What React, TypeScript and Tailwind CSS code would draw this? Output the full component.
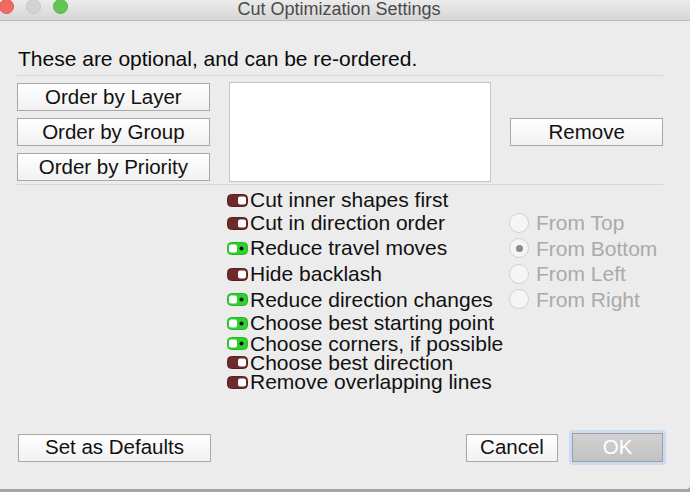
import React from "react";

const font = { fontFamily: '"Liberation Sans", Arial, sans-serif' };

function Toggle({ on }: { on: boolean }) {
  return on ? (
    <svg width="21" height="13" viewBox="0 0 21 13" className="shrink-0">
      <rect x="0.5" y="0.5" width="20" height="12" rx="4" fill="#2fd12f" stroke="#27b327" />
      <rect x="2" y="2.5" width="8" height="8" rx="2" fill="#ffffff" />
      <circle cx="14.5" cy="6.5" r="2" fill="#111" />
    </svg>
  ) : (
    <svg width="21" height="13" viewBox="0 0 21 13" className="shrink-0">
      <rect x="0.5" y="0.5" width="20" height="12" rx="4" fill="#6d2a2b" stroke="#5a2020" />
      <rect x="11" y="2.5" width="8" height="8" rx="2" fill="#ffffff" />
    </svg>
  );
}

function Radio({ checked }: { checked?: boolean }) {
  return (
    <span className="w-[20px] h-[20px] rounded-full border border-[#d2d2d2] bg-[#f5f5f5] flex items-center justify-center shrink-0">
      {checked && <span className="w-[7px] h-[7px] rounded-full bg-[#8c8c8c]" />}
    </span>
  );
}

function Btn({ children, className = "" }: { children: React.ReactNode; className?: string }) {
  return (
    <div
      className={`h-[28px] border border-[#a8a8a8] bg-gradient-to-b from-[#ffffff] to-[#f1f1f1] flex items-center justify-center text-[20.5px] text-[#111] ${className}`}
    >
      {children}
    </div>
  );
}

const checks: { label: string; on: boolean; h: string }[] = [
  { label: "Cut inner shapes first", on: false, h: "h-[22px] leading-[22px]" },
  { label: "Cut in direction order", on: false, h: "h-[24px] leading-[24px]" },
  { label: "Reduce travel moves", on: true, h: "h-[26px] leading-[26px]" },
  { label: "Hide backlash", on: false, h: "h-[26px] leading-[26px]" },
  { label: "Reduce direction changes", on: true, h: "h-[25px] leading-[25px]" },
  { label: "Choose best starting point", on: true, h: "h-[22px] leading-[22px]" },
  { label: "Choose corners, if possible", on: true, h: "h-[19px] leading-[19px]" },
  { label: "Choose best direction", on: false, h: "h-[19px] leading-[19px]" },
  { label: "Remove overlapping lines", on: false, h: "h-[20px] leading-[20px]" },
];

const radios = [
  { label: "From Top", checked: false },
  { label: "From Bottom", checked: true },
  { label: "From Left", checked: false },
  { label: "From Right", checked: false },
];

export default function App() {
  return (
    <div className="w-[690px] h-[492px] flex flex-col bg-[#a4a4a4] overflow-hidden" style={font}>
      <div className="h-[489px] flex flex-col bg-[#ececec] rounded-br-[4px]">
        {/* Title bar */}
        <div className="h-[21px] shrink-0 relative flex items-center justify-center bg-gradient-to-b from-[#ebebeb] to-[#d6d6d6] border-b border-[#b9b9b9]">
          <div className="absolute left-0 top-[-1px] flex items-center">
            <span className="w-[15px] h-[15px] rounded-full bg-[#ef6b60] border border-[#e0564b] ml-[-1px]" />
            <span className="w-[15px] h-[15px] rounded-full bg-[#d3d3d3] border border-[#c4c4c4] ml-[12px]" />
            <span className="w-[15px] h-[15px] rounded-full bg-[#62c655] border border-[#52b545] ml-[12px]" />
          </div>
          <span className="text-[18px] text-[#4a4a4a] leading-none mt-[-2px] -ml-[12px]">Cut Optimization Settings</span>
        </div>

        {/* Content */}
        <div className="flex flex-col pl-[17px] pr-[27px]">
          <div className="pt-[26px] pl-[1px] text-[21px] leading-[24px] text-[#0a0a0a]">
            These are optional, and can be re-ordered.
          </div>
          <div className="mt-[4px] h-px bg-[#d6d6d6]" />

          <div className="flex items-center mt-[6px]">
            <div className="flex flex-col gap-[7px] w-[193px]">
              <Btn>Order by Layer</Btn>
              <Btn>Order by Group</Btn>
              <Btn>Order by Priority</Btn>
            </div>
            <div className="ml-[19px] w-[263px] h-[100px] bg-white border border-[#c4c4c4]" />
            <Btn className="ml-[19px] w-[153px]">Remove</Btn>
          </div>

          <div className="mt-[2px] h-px bg-[#d6d6d6]" />

          <div className="flex mt-[4px]">
            <div className="ml-[210px] w-[282px] flex flex-col">
              {checks.map((c) => (
                <div key={c.label} className={`${c.h} flex items-center`}>
                  <Toggle on={c.on} />
                  <span className="ml-[2px] text-[21px] text-[#111] whitespace-nowrap">{c.label}</span>
                </div>
              ))}
            </div>
            <div className="flex flex-col mt-[21px]">
              {radios.map((r) => (
                <div key={r.label} className="h-[25.5px] leading-[25px] flex items-center">
                  <Radio checked={r.checked} />
                  <span className="ml-[7px] text-[21px] text-[#aaaaaa] whitespace-nowrap">{r.label}</span>
                </div>
              ))}
            </div>
          </div>

          <div className="flex items-center mt-[38px]">
            <Btn className="ml-[1px] w-[193px]">Set as Defaults</Btn>
            <div className="flex-1" />
            <Btn className="w-[92px]">Cancel</Btn>
            <div className="ml-[11px] -mr-[3px] p-[3px] rounded-[4px] bg-[#c9dcf1]">
              <div className="w-[91px] h-[29px] border border-[#a0a0a0] bg-gradient-to-b from-[#d2d2d2] to-[#c2c2c2] flex items-center justify-center text-[20.5px] text-white">
                OK
              </div>
            </div>
          </div>
        </div>
      </div>
    </div>
  );
}
